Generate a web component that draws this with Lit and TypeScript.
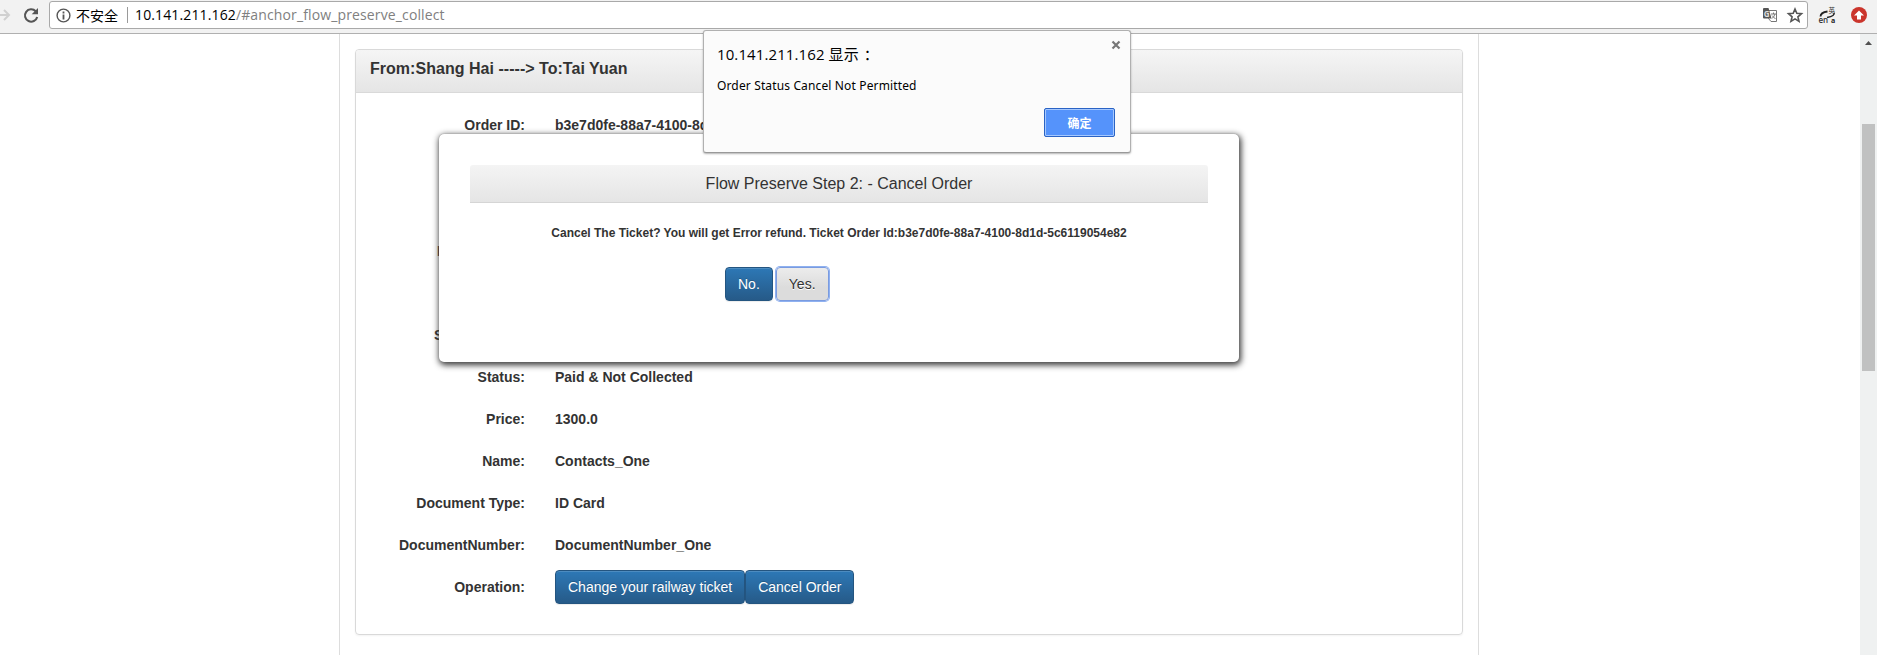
import { LitElement, html, css } from "lit";
import { customElement } from "lit/decorators.js";

const ORDER_ID = "b3e7d0fe-88a7-4100-8d1d-5c6119054e82";

const ROWS: [string, string][] = [
  ["Order ID:", ORDER_ID],
  ["From:", "Shang Hai"],
  ["To:", "Tai Yuan"],
  ["Bought Date:", ""],
  ["Train:", ""],
  ["Seat Number:", ""],
  ["Status:", "Paid & Not Collected"],
  ["Price:", "1300.0"],
  ["Name:", "Contacts_One"],
  ["Document Type:", "ID Card"],
  ["DocumentNumber:", "DocumentNumber_One"],
];

@customElement("browser-bar")
class BrowserBar extends LitElement {
  static styles = css`
    :host { display: flex; height: 33px; background: #f2f2f2; border-bottom: 1px solid #b0b0b0; flex: none;
      font-family: "Open Sans", "Noto Sans", "Noto Sans CJK SC", sans-serif; }
    svg { display: block; flex: none; }
    .nav { width: 49px; height: 30px; }
    .box { box-sizing: border-box; flex: 1; height: 28px; margin-top: 1px; background: #fff; border: 1px solid #a9a9a9;
      border-radius: 3px; display: flex; align-items: center; padding-left: 6px; }
    .secure { font-family: "Noto Sans CJK SC", sans-serif; font-size: 14px; line-height: 20px; margin-left: 5px; width: 43px; color: #000; white-space: nowrap; }
    .sep { width: 1px; height: 16px; background: #9a9a9a; margin: 0 7px 0 8px; }
    .url { font-size: 14px; line-height: 20px; color: #808080; white-space: nowrap; flex: 1; letter-spacing: 0.13px; }
    .host { color: #000; }
    .tools { width: 69px; height: 30px; }
    .boxicons { width: 50px; height: 26px; }
  `;
  render() {
    return html`
      <svg class="nav" viewBox="0 0 49 30">
        <path d="M0 15H9M4 10l5 5-5 5" fill="none" stroke="#d0d0d0" stroke-width="2" />
        <path d="M35.700 11.200A6.200 6.200 0 1 0 37.200 17" fill="none" stroke="#555" stroke-width="2.100" />
        <path d="M38 8v6.300h-6.300z" fill="#555" />
      </svg>
      <div class="box">
        <svg width="15" height="15" viewBox="0 0 15 15">
          <circle cx="7.500" cy="7.500" r="6.400" fill="none" stroke="#555" stroke-width="1.400" />
          <path d="M6.600 6.600h1.800v5H6.600zM6.600 3.600h1.800v1.800H6.600z" fill="#555" />
        </svg>
        <span class="secure">不安全</span><span class="sep"></span>
        <span class="url"><span class="host">10.141.211.162</span>/#anchor_flow_preserve_collect</span>
        <svg class="boxicons" viewBox="1757 2 50 26">
          <path d="M1768.500 10.500h8v11h-5.500l-2.500-3z" fill="#fff" stroke="#777" />
          <path d="M1763 9q0-1 1-1h4.500l3 10.500h-7.500q-1 0-1-1z" fill="#555" />
          <text x="1763.700" y="17" font-size="8" font-weight="700" fill="#ddd">G</text>
          <path d="M1771 14h5M1773.500 12.500v1.500M1775 14q-1 3-3 4.500M1772 15.500l3.500 3.500" stroke="#777" fill="none" />
          <path d="M1795 9l1.800 4.300 4.700.4-3.600 3.100 1.100 4.600-4-2.500-4 2.500 1.100-4.600-3.600-3.100 4.700-.4z" fill="none" stroke="#555" stroke-width="1.600" />
        </svg>
      </div>
      <svg class="tools" viewBox="1808 0 69 30">
        <path d="M1820.500 16.500q0-4 7-5" fill="none" stroke="#222" stroke-width="1.800" />
        <path d="M1834 12.500q1.500 3.500-7 5" fill="none" stroke="#222" stroke-width="1.500" />
        <text x="1828.500" y="12.800" font-size="6.500" fill="#333">英</text>
        <text x="1818.500" y="22.500" font-size="8" font-weight="600" fill="#333">en</text>
        <text x="1831" y="22.500" font-size="7" font-weight="700" fill="#222">a</text>
        <circle cx="1859" cy="15" r="8" fill="#cb352c" />
        <path d="M1859 10.500l5 5h-3v4h-4v-4h-3z" fill="#fff" />
      </svg>
    `;
  }
}

@customElement("scroll-track")
class ScrollTrack extends LitElement {
  static styles = css`
    :host { width: 17px; flex: none; background: #eff1f1; display: flex; flex-direction: column; align-items: center; }
    svg { display: block; height: 90px; width: 17px; flex: none; }
    .thumb { width: 13px; height: 247px; background: #c0c1c1; }
  `;
  render() {
    return html`<svg viewBox="0 0 17 90"><path d="M5 11l3.500-4 3.500 4z" fill="#505050" /></svg><div class="thumb"></div>`;
  }
}

const button = css`
  .btn { box-sizing: border-box; height: 34px; border: 1px solid #245580; border-radius: 4px; padding: 0 12px;
    font: 14px/32px "Liberation Sans", Arial, sans-serif; color: #fff; white-space: nowrap; flex: none;
    background: linear-gradient(#2d78b6, #265a88 100%);
    box-shadow: inset 0 1px 0 rgba(255,255,255,.15), 0 1px 1px rgba(0,0,0,.075); text-shadow: 0 -1px 0 rgba(0,0,0,.2); }
`;

@customElement("cancel-dialog")
class CancelDialog extends LitElement {
  static styles = [button, css`
    :host { position: absolute; left: 439px; top: 134px; width: 800px; height: 228px; box-sizing: border-box;
      background: #fff; border-radius: 5px; box-shadow: 0 0 1px #777, 1px 2px 6px 1px #333; padding: 31px 31px 0; }
    .title { box-sizing: border-box; height: 38px; background: linear-gradient(#f4f4f4, #e5e5e5); border-bottom: 1px solid #d5d5d5;
      border-radius: 3px 3px 0 0; text-align: center; font-size: 16px; line-height: 37px; }
    .text { margin-top: 21px; text-align: center; font-weight: 700; font-size: 12px; line-height: 18px; white-space: nowrap; }
    .actions { display: flex; gap: 3px; margin: 25px 0 0 255px; }
    .yes { color: #333; border-color: #7a9be0; background: linear-gradient(#ececec, #dcdcdc 60%); box-shadow: 0 0 0 1px #8fb1f0; text-shadow: 0 1px 0 #fff; }
  `];
  render() {
    return html`
      <div class="title">Flow Preserve Step 2: - Cancel Order</div>
      <div class="text">Cancel The Ticket? You will get Error refund. Ticket Order Id:${ORDER_ID}</div>
      <div class="actions"><button class="btn">No.</button><button class="btn yes">Yes.</button></div>
    `;
  }
}

@customElement("alert-box")
class AlertBox extends LitElement {
  static styles = css`
    :host { position: absolute; left: 703px; top: 30px; width: 428px; height: 123px; box-sizing: border-box; display: flex; flex-direction: column;
      background: #fbfbfb; border: 1px solid #b0b0b0; border-bottom-color: #999; border-radius: 3px; box-shadow: 0 1px 2px rgba(0,0,0,.3);
      padding: 12px 15px 0 13px; color: #000; font-family: "Open Sans", "Noto Sans", "Noto Sans CJK SC", sans-serif; }
    .head { display: flex; justify-content: space-between; font-size: 15px; line-height: 22px; letter-spacing: 0.1px; }
    .head svg { margin: -3px -6px 0 0; }
    .colon { margin-left: 5px; }
    .msg { font-family: "Noto Sans", sans-serif; font-size: 12px; line-height: 18px; margin-top: 12px; letter-spacing: 0.14px; }
    .ok { align-self: flex-end; box-sizing: border-box; width: 71px; height: 29px; margin-top: 13px; border: 1px solid #2a63c4; border-radius: 2px;
      background: #5593fb; box-shadow: inset 0 0 0 1px #a5c8ff; color: #fff; font: 700 12px/26px "Noto Sans CJK SC", sans-serif; padding: 0; }
  `;
  render() {
    return html`
      <div class="head"><span>10.141.211.162 显示<span class="colon">：</span></span>
        <svg width="10" height="10" viewBox="0 0 10 10"><path d="M1.500 1.500l7 7M8.500 1.500l-7 7" stroke="#777" stroke-width="2.200" /></svg></div>
      <div class="msg">Order Status Cancel Not Permitted</div>
      <button class="ok">确定</button>
    `;
  }
}

@customElement("app-root")
class AppRoot extends LitElement {
  static styles = [button, css`
    :host { display: flex; flex-direction: column; position: relative; width: 1877px; height: 655px; overflow: hidden;
      background: #fff; color: #333; font-family: "Liberation Sans", Arial, sans-serif; }
    .main { flex: 1; display: flex; min-height: 0; }
    .page { flex: 1; display: flex; }
    .container { box-sizing: border-box; width: 1140px; margin-left: 339px; border: solid #ddd; border-width: 0 1px; padding: 15px 15px 0; }
    .panel { box-sizing: border-box; height: 586px; border: 1px solid #d9d9d9; border-radius: 4px; box-shadow: 0 1px 2px rgba(0,0,0,.05); overflow: hidden; }
    .heading { box-sizing: border-box; height: 43px; padding-left: 14px; background: linear-gradient(#f5f5f5, #e5e5e5); border-bottom: 1px solid #d9d9d9;
      font-size: 16px; font-weight: 700; line-height: 37px; letter-spacing: 0.03px; }
    .rows { padding-top: 11px; font-size: 14px; font-weight: 700; }
    .row { display: flex; height: 42px; line-height: 42px; align-items: center; gap: 30px; }
    .label { width: 169px; text-align: right; white-space: nowrap; }
    .buttons { display: flex; }
  `];
  render() {
    return html`
      <browser-bar></browser-bar>
      <div class="main">
        <div class="page"><div class="container"><div class="panel">
          <div class="heading">From:Shang Hai -----&gt; To:Tai Yuan</div>
          <div class="rows">
            ${ROWS.map(([k, v]) => html`<div class="row"><span class="label">${k}</span><span>${v}</span></div>`)}
            <div class="row"><span class="label">Operation:</span>
              <div class="buttons"><button class="btn">Change your railway ticket</button><button class="btn">Cancel Order</button></div></div>
          </div>
        </div></div></div>
        <scroll-track></scroll-track>
      </div>
      <cancel-dialog></cancel-dialog>
      <alert-box></alert-box>
    `;
  }
}
